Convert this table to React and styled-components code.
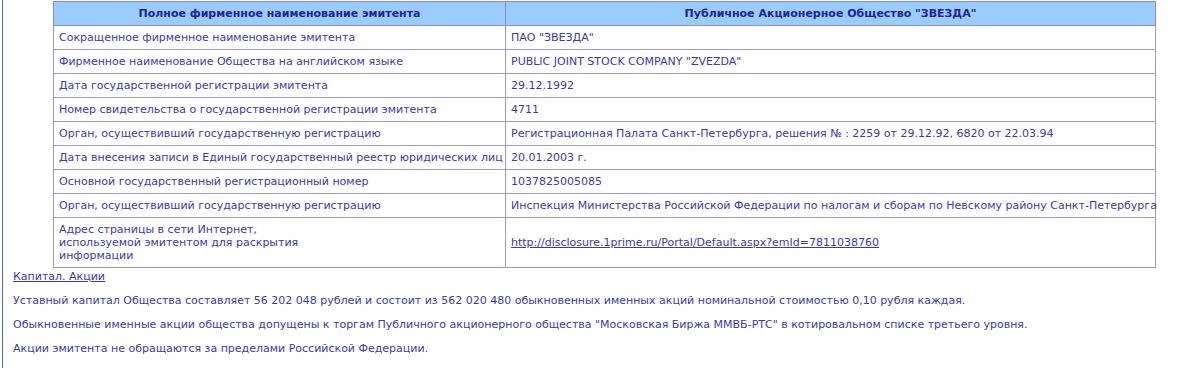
import React from "react";
import styled, { createGlobalStyle } from "styled-components";

const Global = createGlobalStyle`
  html, body { margin: 0; padding: 0; background: #fff; }
  body { font-family: "DejaVu Sans", Verdana, sans-serif; }
`;

const Page = styled.div`
  min-height: 368px;
  margin-left: 2px;
  border-left: 1px solid #4a64d8;
  padding: 1px 0 0 0;
  box-sizing: border-box;
  color: #3a3ab4;
  font-size: 11px;
  line-height: 13px;
`;

const Table = styled.table`
  margin-left: 50px;
  width: 1103px;
  border-collapse: collapse;
  table-layout: fixed;
`;

const HeadCell = styled.th`
  background: #99ccff;
  color: #22229a;
  font-weight: bold;
  text-align: center;
  height: 23px;
  padding: 0 5px;
  border: 1px solid #8c8cc8;
  font-size: 11px;
`;

const Cell = styled.td`
  border: 1px solid #9a9acc;
  padding: ${(p) => (p.$tall ? "5px 5px" : "0 5px")};
  height: ${(p) => (p.$tall ? "37px" : "23px")};
  vertical-align: middle;
  white-space: nowrap;
`;

const Link = styled.a`
  color: #3a3ab4;
  text-decoration: underline;
`;

const Section = styled.div`
  padding: 2px 0 0 10px;
`;

const Para = styled.p`
  margin: 11px 0 0 0;
`;

const rows = [
  ["Сокращенное фирменное наименование эмитента", 'ПАО "ЗВЕЗДА"'],
  ["Фирменное наименование Общества на английском языке", 'PUBLIC JOINT STOCK COMPANY "ZVEZDA"'],
  ["Дата государственной регистрации эмитента", "29.12.1992"],
  ["Номер свидетельства о государственной регистрации эмитента", "4711"],
  ["Орган, осуществивший государственную регистрацию", "Регистрационная Палата Санкт-Петербурга, решения № : 2259 от 29.12.92, 6820 от 22.03.94"],
  ["Дата внесения записи в Единый государственный реестр юридических лиц", "20.01.2003 г."],
  ["Основной государственный регистрационный номер", "1037825005085"],
  ["Орган, осуществивший государственную регистрацию", "Инспекция Министерства Российской Федерации по налогам и сборам по Невскому району Санкт-Петербурга"],
];

export default function App() {
  return (
    <>
      <Global />
      <Page>
        <Table>
          <colgroup>
            <col style={{ width: "452px" }} />
            <col />
          </colgroup>
          <thead>
            <tr>
              <HeadCell>Полное фирменное наименование эмитента</HeadCell>
              <HeadCell>Публичное Акционерное Общество "ЗВЕЗДА"</HeadCell>
            </tr>
          </thead>
          <tbody>
            {rows.map(([a, b], i) => (
              <tr key={i}>
                <Cell>{a}</Cell>
                <Cell>{b}</Cell>
              </tr>
            ))}
            <tr>
              <Cell $tall>
                Адрес страницы в сети Интернет,
                <br />
                используемой эмитентом для раскрытия
                <br />
                информации
              </Cell>
              <Cell $tall>
                <Link href="#">http://disclosure.1prime.ru/Portal/Default.aspx?emId=7811038760</Link>
              </Cell>
            </tr>
          </tbody>
        </Table>
        <Section>
          <Link href="#">Капитал. Акции</Link>
          <Para>Уставный капитал Общества составляет 56 202 048 рублей и состоит из 562 020 480 обыкновенных именных акций номинальной стоимостью 0,10 рубля каждая.</Para>
          <Para>Обыкновенные именные акции общества допущены к торгам Публичного акционерного общества "Московская Биржа ММВБ-РТС" в котировальном списке третьего уровня.</Para>
          <Para>Акции эмитента не обращаются за пределами Российской Федерации.</Para>
        </Section>
      </Page>
    </>
  );
}
